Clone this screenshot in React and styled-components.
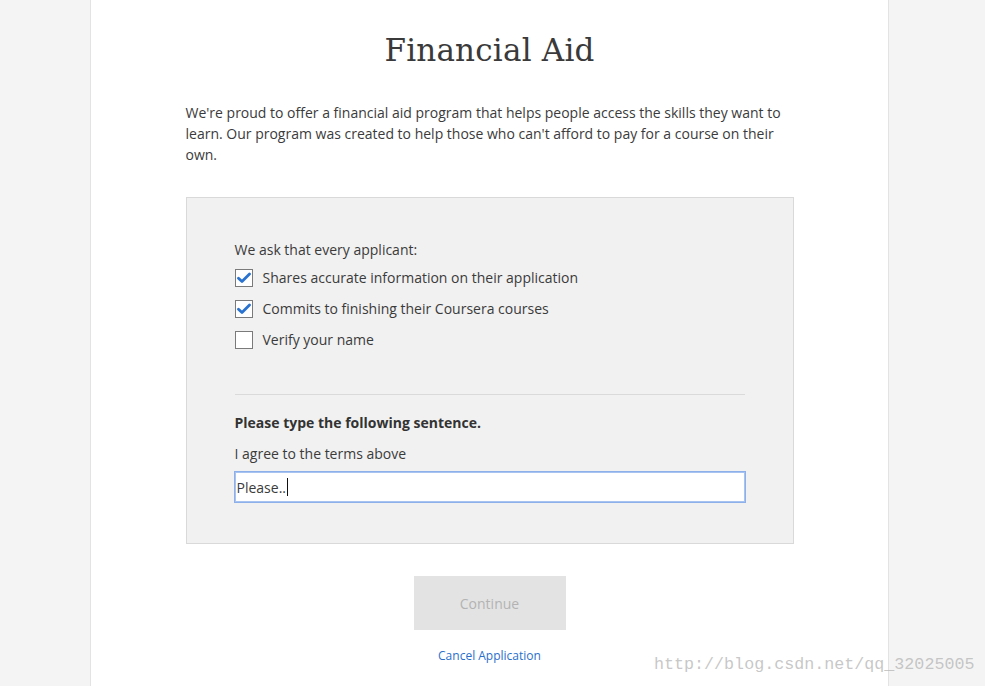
import React from "react";
import styled, { createGlobalStyle } from "styled-components";

const Global = createGlobalStyle`
  html, body { margin: 0; padding: 0; background: #f4f4f4; }
  body { font-family: "Open Sans", "Noto Sans", sans-serif; color: #3d3d3d; }
  #root { min-height: 686px; }
`;

const Page = styled.div`
  position: relative;
  height: 686px;
  overflow: hidden;
`;

const Column = styled.main`
  margin-left: 90px;
  width: 797px;
  height: 686px;
  background: #fff;
  border-left: 1px solid #e3e3e3;
  border-right: 1px solid #e3e3e3;
`;

const Inner = styled.div`
  width: 608px;
  margin: 0 auto;
  display: flex;
  flex-direction: column;
`;

const Title = styled.h1`
  margin: 27px 0 0;
  font-family: "DejaVu Serif", "Liberation Serif", serif;
  font-weight: 300;
  font-size: 31px;
  line-height: 46px;
  color: #3a3a3a;
  text-align: center;
  letter-spacing: 0.2px;
`;

const Intro = styled.p`
  margin: 29px 0 0;
  font-size: 14px;
  line-height: 21px;
  color: #3b3b3b;
`;

const Panel = styled.section`
  margin-top: 32px;
  background: #f1f1f1;
  border: 1px solid #d9d9d9;
  padding: 41px 48px 40px;
  display: flex;
  flex-direction: column;
`;

const Lead = styled.div`
  font-size: 14px;
  line-height: 21px;
  color: #3b3b3b;
`;

const List = styled.div`
  margin-top: 9px;
  display: flex;
  flex-direction: column;
  gap: 13px;
`;

const Row = styled.label`
  display: flex;
  align-items: center;
  gap: 10px;
  font-size: 14px;
  line-height: 18px;
  color: #3b3b3b;
`;

const Box = styled.span`
  width: 16px;
  height: 16px;
  border: 1px solid #7a7a7a;
  background: #fff;
  display: flex;
  align-items: center;
  justify-content: center;
  flex: none;
`;

const Divider = styled.hr`
  margin: 45px 0 0;
  border: 0;
  border-top: 1px solid #dadada;
  height: 0;
`;

const Heading = styled.div`
  margin-top: 17px;
  font-size: 14px;
  line-height: 21px;
  font-weight: 700;
  color: #333;
`;

const Sentence = styled.div`
  margin-top: 10px;
  font-size: 14px;
  line-height: 21px;
  color: #3b3b3b;
`;

const Input = styled.div`
  margin: 7px -1px 0;
  height: 30px;
  border: 1px solid #8eb0ea;
  box-shadow: 0 0 0 1px #a9c3f0 inset;
  background: #fff;
  display: flex;
  align-items: center;
  padding-left: 2px;
  font-size: 14px;
  color: #3b3b3b;
`;

const Caret = styled.span`
  display: inline-block;
  width: 1px;
  height: 18px;
  background: #111;
  margin-left: 1px;
`;

const Actions = styled.div`
  margin-top: 32px;
  display: flex;
  flex-direction: column;
  align-items: center;
`;

const Continue = styled.button`
  width: 152px;
  height: 54px;
  border: 0;
  background: #e3e3e3;
  color: #b3b3b3;
  font-family: "Open Sans", sans-serif;
  font-size: 14px;
  cursor: default;
`;

const Cancel = styled.a`
  margin-top: 18px;
  font-size: 12px;
  line-height: 16px;
  color: #2a6fcc;
  text-decoration: none;
`;

const Watermark = styled.div`
  position: absolute;
  left: 654px;
  top: 655px;
  font-family: "Liberation Mono", "DejaVu Sans Mono", monospace;
  font-size: 16.7px;
  color: rgba(185, 185, 185, 0.8);
  white-space: nowrap;
`;

const Check = () => (
  <svg width="14" height="12" viewBox="0 0 14 12">
    <path d="M1.5 6.2 L5 9.5 L12.5 2" fill="none" stroke="#2a72d0" strokeWidth="2.8" strokeLinecap="round" strokeLinejoin="round" />
  </svg>
);

const items = [
  { text: "Shares accurate information on their application", checked: true },
  { text: "Commits to finishing their Coursera courses", checked: true },
  { text: "Verify your name", checked: false },
];

export default function App() {
  return (
    <Page>
      <Global />
      <Column>
        <Inner>
          <Title>Financial Aid</Title>
          <Intro>
            We're proud to offer a financial aid program that helps people access the skills they want to learn. Our program was created to help those who can't afford to pay for a course on their own.
          </Intro>
          <Panel>
            <Lead>We ask that every applicant:</Lead>
            <List>
              {items.map((it) => (
                <Row key={it.text}>
                  <Box>{it.checked && <Check />}</Box>
                  {it.text}
                </Row>
              ))}
            </List>
            <Divider />
            <Heading>Please type the following sentence.</Heading>
            <Sentence>I agree to the terms above</Sentence>
            <Input>
              Please..<Caret />
            </Input>
          </Panel>
          <Actions>
            <Continue>Continue</Continue>
            <Cancel href="#">Cancel Application</Cancel>
          </Actions>
        </Inner>
      </Column>
      <Watermark>http://blog.csdn.net/qq_32025005</Watermark>
    </Page>
  );
}
